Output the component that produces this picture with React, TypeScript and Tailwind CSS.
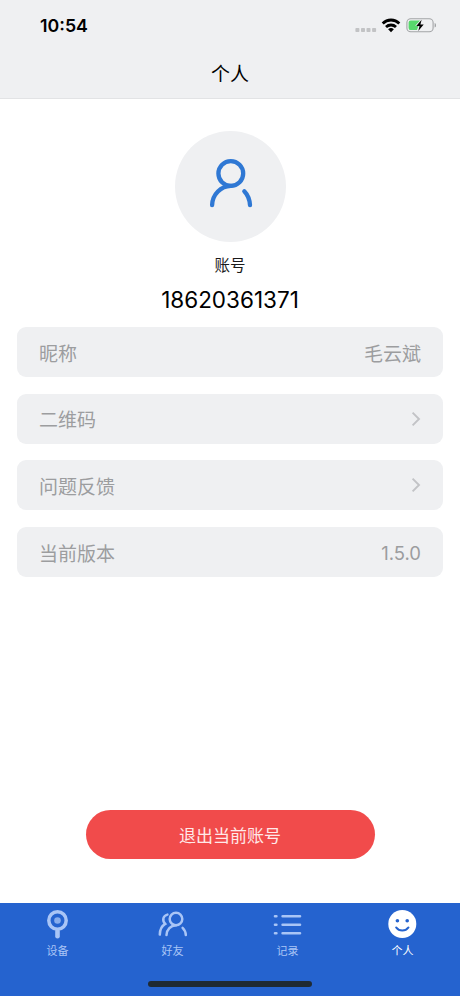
import type { ReactNode } from "react";

const rows = [
  { label: "昵称", value: "毛云斌" },
  { label: "二维码" },
  { label: "问题反馈" },
  { label: "当前版本", value: "1.5.0" },
];

function StatusBar() {
  return (
    <div className="flex h-[50px] items-start justify-between pl-10 pr-6">
      <span className="mt-[13px] text-[17.8px] font-semibold leading-[26px] text-black">10:54</span>
      <svg className="mt-4 h-[18px] w-[82px]" viewBox="0 0 82 18" fill="none">
        <g fill="#c2c3c5">
          <rect x="1.4" y="12" width="4" height="4" rx="0.8" />
          <rect x="7" y="12" width="4" height="4" rx="0.8" />
          <rect x="12.5" y="12" width="4" height="4" rx="0.8" />
          <rect x="18.1" y="12" width="4" height="4" rx="0.8" />
        </g>
        <g stroke="#000" strokeWidth="2.8">
          <path d="M28.7 7.4a11.8 11.8 0 0 1 16.6 0" />
          <path d="M32 11a7.2 7.2 0 0 1 10 0" />
        </g>
        <path d="M37 16.2l-2.9-2.9a4.2 4.2 0 0 1 5.8 0z" fill="#000" />
        <rect x="52.9" y="2.7" width="26.2" height="13" rx="3.8" stroke="#a2a4a6" strokeWidth="1.1" />
        <path d="M80.6 7v4.4c1.2-.5 1.6-1.2 1.6-2.2s-.4-1.7-1.6-2.2z" fill="#a2a4a6" />
        <path d="M56.8 4.4H66l-4.8 5.4h3.3l-1.5 4.3h-6.2a2.2 2.2 0 0 1-2.2-2.2V6.6a2.2 2.2 0 0 1 2.2-2.2z" fill="#57d86c" />
        <path d="M67.6 3.7l-5.3 6.2h3.2L64.3 15l5.4-6.5h-3.3z" fill="#000" />
      </svg>
    </div>
  );
}

function Avatar() {
  return (
    <div className="flex size-[111px] items-center justify-center rounded-full bg-[#eff0f2]">
      <svg className="size-[60px]" viewBox="0 0 60 60" fill="none" stroke="#2f78d4" strokeWidth="4.3" strokeLinecap="round">
        <circle cx="30.8" cy="16.5" r="12.4" />
        <path d="M12.1 48.2C12.5 37.2 20.9 29.2 30.9 28.9" />
        <path d="M44.3 34.2C47.5 37.5 49.7 42.7 50 48.2" />
      </svg>
    </div>
  );
}

function Tab({ label, active, children }: { label: string; active?: boolean; children: ReactNode }) {
  return (
    <div className={`flex flex-1 flex-col items-center pt-[3px] ${active ? "text-white" : "text-[#a9c5f6]"}`}>
      <svg className="size-9" viewBox="0 0 36 36" fill="none" stroke="currentColor" strokeLinecap="round">
        {children}
      </svg>
      <span className="mt-px text-[11px] leading-4">{label}</span>
    </div>
  );
}

export default function App() {
  return (
    <div className="flex h-[996px] w-[460px] flex-col bg-white font-['Inter','Noto_Sans_CJK_SC',sans-serif]">
      <header className="h-[99px] border-b border-[#e2e3e5] bg-[#eff0f2]">
        <StatusBar />
        <h1 className="pt-px text-center text-[19px] font-normal leading-[47px] text-black">个人</h1>
      </header>

      <main className="flex flex-1 flex-col items-center px-[17px] pt-8">
        <Avatar />
        <p className="mt-3 text-[15.5px] leading-6 text-[#1a1a1a]">账号</p>
        <p className="mt-[5px] text-[22.5px] leading-[34px] text-black">18620361371</p>

        <div className="mt-[10px] flex w-full flex-col gap-[16.7px]">
          {rows.map((row) => (
            <div
              key={row.label}
              className="flex h-[50px] items-center justify-between rounded-[9px] bg-[#eff0f2] px-[22px] text-[19px] text-[#9c9d9f]"
            >
              <span className="pt-[6px]">{row.label}</span>
              {row.value ? (
                <span className={row.value === "1.5.0" ? "pt-[3px] text-[18.5px]" : "pt-[6px]"}>{row.value}</span>
              ) : (
                <svg className="h-4 w-[10px]" viewBox="0 0 10 16" fill="none" stroke="#c2c3c6" strokeWidth="1.9">
                  <path d="M1.6 1.6L8 8L1.6 14.4" />
                </svg>
              )}
            </div>
          ))}
        </div>

        <button className="mb-[44px] mt-auto h-[49px] w-[289px] rounded-full bg-[#f14b4b] pt-1 text-[17px] text-[#ffe9e9]">
          退出当前账号
        </button>
      </main>

      <nav className="relative flex h-[93px] bg-[#2563cf]">
        <Tab label="设备">
          <circle cx="17.5" cy="14.5" r="8.7" strokeWidth="3.5" />
          <circle cx="17.5" cy="14.5" r="3.3" fill="currentColor" stroke="none" opacity="0.75" />
          <path d="M17.5 25v5.2" strokeWidth="4.6" />
        </Tab>
        <Tab label="好友">
          <g strokeWidth="2.5">
            <circle cx="21" cy="13" r="6.3" />
            <path d="M11.5 29C11.7 23.5 15.8 19.4 21 19.3" />
            <path d="M27.6 21.8C29.5 23.6 30.7 26.2 30.8 29" />
            <path d="M12.4 8.6C8.1 9.7 6.8 14.3 10.2 17.9C7 19.8 4.9 23.8 4.8 28.6" />
          </g>
        </Tab>
        <Tab label="记录">
          <g strokeWidth="2.6">
            <path d="M5 10.3h1.4M12.6 10.3H30" />
            <path d="M5 18.8h1.4M12.6 18.8H30" />
            <path d="M5 27.3h1.4M12.6 27.3H30" />
          </g>
        </Tab>
        <Tab label="个人" active>
          <circle cx="17.3" cy="18" r="14" fill="currentColor" stroke="none" />
          <g fill="#2563cf" stroke="none">
            <circle cx="12.4" cy="14.8" r="1.8" />
            <circle cx="22.2" cy="14.8" r="1.8" />
          </g>
          <path d="M11.1 21.4C14.1 25.6 20.5 25.6 23.5 21.4" stroke="#2563cf" strokeWidth="1.9" />
        </Tab>
        {/* Home indicator */}
        <div className="absolute bottom-[9px] left-[148px] h-[6px] w-[164px] rounded-full bg-[#1f2a33]" />
      </nav>
    </div>
  );
}
